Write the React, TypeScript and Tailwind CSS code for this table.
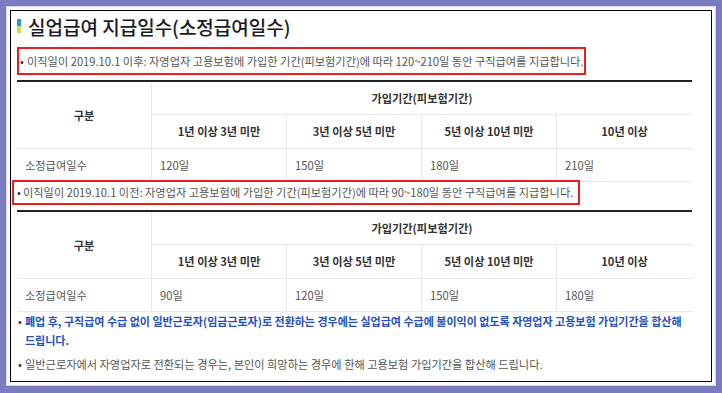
import React from "react";

const font = { fontFamily: '"Noto Sans CJK KR", "Noto Sans", sans-serif' };

function Table({ days }: { days: string[] }) {
  const periods = ["1년 이상 3년 미만", "3년 이상 5년 미만", "5년 이상 10년 미만", "10년 이상"];
  return (
    <div className="ml-[6px] w-[675px] border-t-2 border-[#222] text-[11.2px]">
      <div className="flex border-b border-[#e5eaec]">
        <div className="w-[135px] h-[66px] flex items-center justify-center font-bold text-[#333] border-r border-[#e5eaec]">
          구분
        </div>
        <div className="flex-1 flex flex-col">
          <div className="h-[33px] flex items-center justify-center font-bold text-[#333] border-b border-[#e5eaec]">
            가입기간(피보험기간)
          </div>
          <div className="h-[33px] flex">
            {periods.map((p, i) => (
              <div
                key={p}
                className={
                  "w-[135px] flex items-center justify-center font-bold text-[#333] " +
                  (i < 3 ? "border-r border-[#e5eaec]" : "")
                }
              >
                {p}
              </div>
            ))}
          </div>
        </div>
      </div>
      <div className="flex h-[33px] border-b border-[#e5eaec] text-[#555]">
        <div className="w-[135px] flex items-center pl-[8px] border-r border-[#e5eaec]">소정급여일수</div>
        {days.map((d, i) => (
          <div
            key={i}
            className={"w-[135px] flex items-center pl-[8px] " + (i < 3 ? "border-r border-[#e5eaec]" : "")}
          >
            {d}
          </div>
        ))}
      </div>
    </div>
  );
}

export default function App() {
  return (
    <div className="w-[722px] h-[393px] bg-[#7b7bbf] pt-[6px] pl-[6px]" style={font}>
      <div className="w-[710px] h-[380px] border border-[#d2d2ee] bg-white p-[3px]">
        <div className="w-[702px] h-[372px] border border-black bg-white flex flex-col">
          {/* title */}
          <div className="flex items-center h-[24px] mt-[3px] ml-[6px]">
            <div className="flex flex-col w-[4px]">
              <div className="h-[7px] bg-[#1e9ad6]" />
              <div className="h-[7px] bg-[#c6e04c]" />
            </div>
            <div className="ml-[7px] text-[19px] font-medium text-[#1a1a28] leading-none">
              실업급여 지급일수(소정급여일수)
            </div>
          </div>
          {/* red box 1 */}
          <div className="mt-[9px] ml-[6px] w-[569px] h-[28px] border-2 border-[#ee1c1c] flex items-center text-[11.2px] text-[#555]">
            <span className="w-[8px] pl-[1px] text-[#333]">•</span>
            <span>이직일이 2019.10.1 이후: 자영업자 고용보험에 가입한 기간(피보험기간)에 따라 120~210일 동안 구직급여를 지급합니다.</span>
          </div>
          <div className="mt-[5px]">
            <Table days={["120일", "150일", "180일", "210일"]} />
          </div>
          {/* red box 2 */}
          <div className="-mt-[2px] ml-[1px] w-[568px] h-[25px] border-2 border-[#ee1c1c] flex items-center text-[11.2px] text-[#555]">
            <span className="w-[9px] pl-[3px] text-[#333]">•</span>
            <span>이직일이 2019.10.1 이전: 자영업자 고용보험에 가입한 기간(피보험기간)에 따라 90~180일 동안 구직급여를 지급합니다.</span>
          </div>
          <div className="mt-[5px]">
            <Table days={["90일", "120일", "150일", "180일"]} />
          </div>
          {/* notes */}
          <div className="ml-[6px] w-[680px] flex text-[11px] leading-[19px] mt-[0px]">
            <span className="w-[8px] shrink-0 pl-[1px] text-[#333]">•</span>
            <span className="font-bold text-[#2550bd] break-keep">
              폐업 후, 구직급여 수급 없이 일반근로자(임금근로자)로 전환하는 경우에는 실업급여 수급에 불이익이 없도록 자영업자 고용보험 가입기간을 합산해 드립니다.
            </span>
          </div>
          <div className="ml-[6px] flex text-[11.2px] leading-[19px] mt-[5px] text-[#555]">
            <span className="w-[8px] shrink-0 pl-[1px] text-[#333]">•</span>
            <span className="break-keep">일반근로자에서 자영업자로 전환되는 경우는, 본인이 희망하는 경우에 한해 고용보험 가입기간을 합산해 드립니다.</span>
          </div>
        </div>
      </div>
    </div>
  );
}
